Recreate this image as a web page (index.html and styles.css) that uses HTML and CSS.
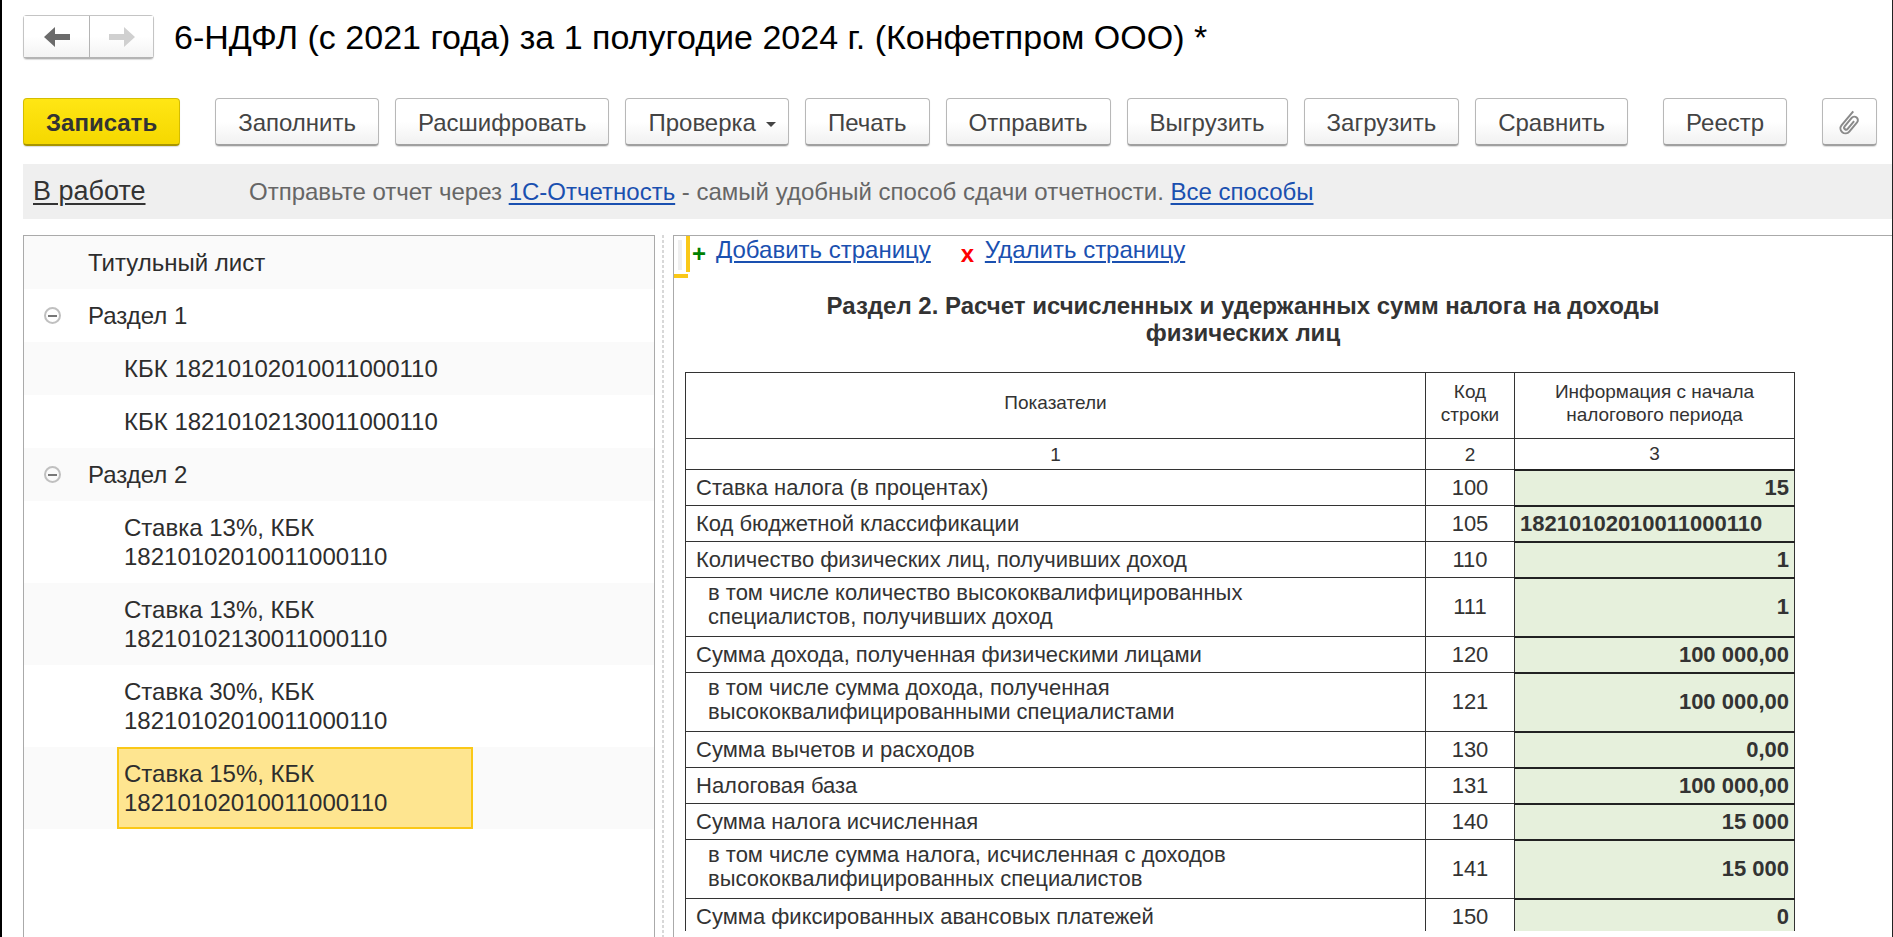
FILE: index.html
```
<!DOCTYPE html>
<html lang="ru">
<head>
    <meta charset="UTF-8">
    <meta name="viewport" content="width=device-width, initial-scale=1.0">
    <title>6-НДФЛ</title>
    <link rel="stylesheet" href="styles.css">
</head>
<body>
    <header class="title-bar">
        <div class="history">
            <button class="history-btn" aria-label="Назад">
                <svg width="26" height="20" viewBox="0 0 26 20"><path d="M0 10L11 0V7H26V13H11V20Z" fill="#6b6b6b"/></svg>
            </button>
            <button class="history-btn" aria-label="Вперед" disabled>
                <svg width="26" height="20" viewBox="0 0 26 20"><path d="M26 10L15 0V7H0V13H15V20Z" fill="#d0d0d0"/></svg>
            </button>
        </div>
        <h1>6-НДФЛ (с 2021 года) за 1 полугодие 2024 г. (Конфетпром ООО) *</h1>
    </header>

    <div class="toolbar">
        <button class="btn primary">Записать</button>
        <div class="group">
            <button class="btn">Заполнить</button>
            <button class="btn">Расшифровать</button>
            <button class="btn dropdown">Проверка</button>
            <button class="btn">Печать</button>
            <button class="btn">Отправить</button>
            <button class="btn">Выгрузить</button>
            <button class="btn">Загрузить</button>
            <button class="btn">Сравнить</button>
        </div>
        <button class="btn">Реестр</button>
        <button class="btn icon" aria-label="Файлы">
            <svg width="26" height="26" viewBox="0 0 26 26" fill="none" stroke="#8a8a8a" stroke-width="2"><path transform="rotate(40 13 13)" d="M8 2V20A5 5 0 0 0 18 20V8A3.5 3.5 0 0 0 11 8V19A2 2 0 0 0 15 19V9"/></svg>
        </button>
    </div>

    <div class="status">
        <a class="state" href="#">В работе</a>
        <p>Отправьте отчет через <a href="#">1С-Отчетность</a> - самый удобный способ сдачи отчетности. <a href="#">Все способы</a></p>
    </div>

    <main class="workspace">
        <ul class="tree">
            <li><span class="item">Титульный лист</span></li>
            <li><button class="toggle" aria-label="Свернуть"></button><span class="item">Раздел 1</span></li>
            <li class="child"><span class="item">КБК 18210102010011000110</span></li>
            <li class="child"><span class="item">КБК 18210102130011000110</span></li>
            <li><button class="toggle" aria-label="Свернуть"></button><span class="item">Раздел 2</span></li>
            <li class="child"><span class="item">Ставка 13%, КБК 18210102010011000110</span></li>
            <li class="child"><span class="item">Ставка 13%, КБК 18210102130011000110</span></li>
            <li class="child"><span class="item">Ставка 30%, КБК 18210102010011000110</span></li>
            <li class="child"><span class="item selected">Ставка 15%, КБК 18210102010011000110</span></li>
        </ul>
        <div class="splitter"></div>
        <section class="sheet">
            <div class="cursor"></div>
            <div class="page-links">
                <b class="plus">+</b><a href="#">Добавить страницу</a>
                <b class="cross">x</b><a href="#">Удалить страницу</a>
            </div>
            <h2>Раздел 2. Расчет исчисленных и удержанных сумм налога на доходы физических лиц</h2>
            <div class="table-wrap">
                <table>
                    <colgroup><col><col class="col-code"><col class="col-value"></colgroup>
                    <thead>
                        <tr><th>Показатели</th><th>Код строки</th><th>Информация с начала налогового периода</th></tr>
                        <tr class="numbers"><th>1</th><th>2</th><th>3</th></tr>
                    </thead>
                    <tbody>
                        <tr><td>Ставка налога (в процентах)</td><td>100</td><td>15</td></tr>
                        <tr><td>Код бюджетной классификации</td><td>105</td><td class="kbk">18210102010011000110</td></tr>
                        <tr><td>Количество физических лиц, получивших доход</td><td>110</td><td>1</td></tr>
                        <tr class="sub"><td>в том числе количество высококвалифицированных<br>специалистов, получивших доход</td><td>111</td><td>1</td></tr>
                        <tr><td>Сумма дохода, полученная физическими лицами</td><td>120</td><td>100 000,00</td></tr>
                        <tr class="sub"><td>в том числе сумма дохода, полученная<br>высококвалифицированными специалистами</td><td>121</td><td>100 000,00</td></tr>
                        <tr><td>Сумма вычетов и расходов</td><td>130</td><td>0,00</td></tr>
                        <tr><td>Налоговая база</td><td>131</td><td>100 000,00</td></tr>
                        <tr><td>Сумма налога исчисленная</td><td>140</td><td>15 000</td></tr>
                        <tr class="sub"><td>в том числе сумма налога, исчисленная с доходов<br>высококвалифицированных специалистов</td><td>141</td><td>15 000</td></tr>
                        <tr><td>Сумма фиксированных авансовых платежей</td><td>150</td><td>0</td></tr>
                    </tbody>
                </table>
            </div>
        </section>
    </main>
</body>
</html>
```
FILE: styles.css
```
* {
    box-sizing: border-box;
}
body {
    display: flex;
    flex-direction: column;
    height: 100vh;
    margin: 0;
    padding-left: 21px;
    border-left: 2px solid #000;
    border-right: 1px solid #222;
    overflow: hidden;
    font-family: "Liberation Sans", Arial, sans-serif;
    font-size: 24px;
    color: #333;
    background: #fff;
}
a {
    color: #1a50b0;
    text-decoration-thickness: 2px;
    text-underline-offset: 3px;
}
button {
    font: inherit;
    color: #444;
    cursor: pointer;
}
.title-bar {
    display: flex;
    align-items: center;
    gap: 20px;
    padding-top: 15px;
}
.history {
    display: flex;
    border: 1px solid #c4c4c4;
    border-bottom: 2px solid #b4b4b4;
    border-radius: 4px;
    box-shadow: 0 1px 1px #ddd;
}
.history-btn {
    display: flex;
    align-items: center;
    justify-content: center;
    width: 63px;
    height: 41px;
    border: none;
    background: linear-gradient(#fff 50%, #f3f3f3);
}
.history-btn:first-child {
    width: 66px;
    border-right: 1px solid #b4b4b4;
}
h1 {
    margin: 0;
    font-size: 34px;
    font-weight: normal;
    line-height: 44px;
    color: #000;
}
.toolbar {
    display: flex;
    gap: 35px;
    margin-top: 39px;
}
.group {
    display: flex;
    gap: 16px;
}
.btn {
    height: 48px;
    padding: 2px 22px 0;
    border: 1px solid #b8b8b8;
    border-bottom: 2px solid #a0a0a0;
    border-radius: 4px;
    background: linear-gradient(#fff 50%, #f1f1f1);
    box-shadow: 0 1px 1px #ddd;
    white-space: nowrap;
}
.primary {
    border-color: #d4bd00;
    border-bottom-color: #a89500;
    background: linear-gradient(#ffe614, #f5d800);
    font-weight: bold;
    color: #333;
}
.dropdown {
    padding-right: 12px;
}
.dropdown::after {
    content: "";
    display: inline-block;
    margin-left: 10px;
    border: 5px solid transparent;
    border-top-color: #444;
    border-bottom: none;
    vertical-align: middle;
}
.icon {
    display: flex;
    align-items: center;
    justify-content: center;
    width: 55px;
    padding: 2px 0 0;
}
.status {
    display: flex;
    align-items: center;
    height: 55px;
    margin-top: 18px;
    padding-left: 10px;
    background: #efefef;
    color: #666;
}
.status p {
    margin: 0;
}
.state {
    width: 216px;
    font-size: 27px;
    color: #333;
}
.workspace {
    display: flex;
    flex: 1;
    min-height: 0;
    margin-top: 16px;
}
.tree {
    width: 632px;
    margin: 0;
    padding: 0;
    border: 1px solid #aaa;
    border-bottom: none;
    list-style: none;
    line-height: 29px;
    color: #2d2d2d;
}
.tree li {
    position: relative;
    padding-left: 57px;
}
.tree li:nth-child(odd) {
    background: #fafafa;
}
.tree .child {
    padding-left: 93px;
}
.item {
    display: block;
    width: 356px;
    padding: 12px 7px;
}
.selected {
    outline: 2px solid #fac817;
    outline-offset: -2px;
    background: #fee590;
}
.toggle {
    position: absolute;
    top: 18px;
    left: 20px;
    width: 17px;
    height: 17px;
    padding: 0;
    border: 2px solid #c0c0c0;
    border-radius: 50%;
    background: linear-gradient(#777, #777) center / 9px 2px no-repeat;
}
.splitter {
    width: 18px;
    background: repeating-linear-gradient(#d8d8d8 0 3px, transparent 3px 5px) 7px 0 / 2px 100% no-repeat;
}
.sheet {
    position: relative;
    display: flex;
    flex: 1;
    flex-direction: column;
    min-width: 0;
    padding-bottom: 6px;
    border-top: 1px solid #aaa;
    border-left: 1px solid #aaa;
}
/* corner of the active cell */
.cursor {
    position: absolute;
    top: 0;
    left: 0;
    width: 16px;
    height: 42px;
    background:
        linear-gradient(#fac817, #fac817) 12px 0 / 4px 36px no-repeat,
        linear-gradient(#fac817, #fac817) 0 38px / 14px 4px no-repeat,
        linear-gradient(#efefef, #efefef) 4px 4px / 4px 30px no-repeat;
}
.page-links {
    display: flex;
    padding-left: 18px;
    line-height: 28px;
}
.page-links b {
    padding-top: 4px;
}
.plus {
    width: 24px;
    color: #008000;
}
.cross {
    width: 24px;
    margin-left: 30px;
    color: #f00;
}
h2 {
    width: 860px;
    margin: 24px 0 26px 139px;
    font-size: 24px;
    line-height: 27px;
    text-align: center;
}
.table-wrap {
    flex: 1;
    min-height: 0;
    overflow: hidden;
    padding-left: 11px;
}
table {
    width: 1110px;
    border-collapse: collapse;
    table-layout: fixed;
    font-size: 22px;
    line-height: 24px;
}
.col-code {
    width: 89px;
}
.col-value {
    width: 280px;
}
th, td {
    border: 1px solid #333;
}
th {
    height: 66px;
    padding: 0 30px 6px;
    font-size: 19px;
    font-weight: normal;
    line-height: 23px;
}
th:nth-child(2) {
    padding: 0 10px 6px;
}
.numbers th {
    height: 31px;
    padding-bottom: 0;
}
td {
    height: 36px;
    padding: 0 10px;
}
td:nth-child(2) {
    text-align: center;
}
td:nth-child(3) {
    padding: 0 5px;
    border-top: 2px solid #222;
    background: #e6f0dc;
    font-weight: bold;
    text-align: right;
}
td.kbk:nth-child(3) {
    text-align: left;
}
.sub td {
    height: 59px;
}
.sub td:first-child {
    padding: 0 22px 5px;
}
```
